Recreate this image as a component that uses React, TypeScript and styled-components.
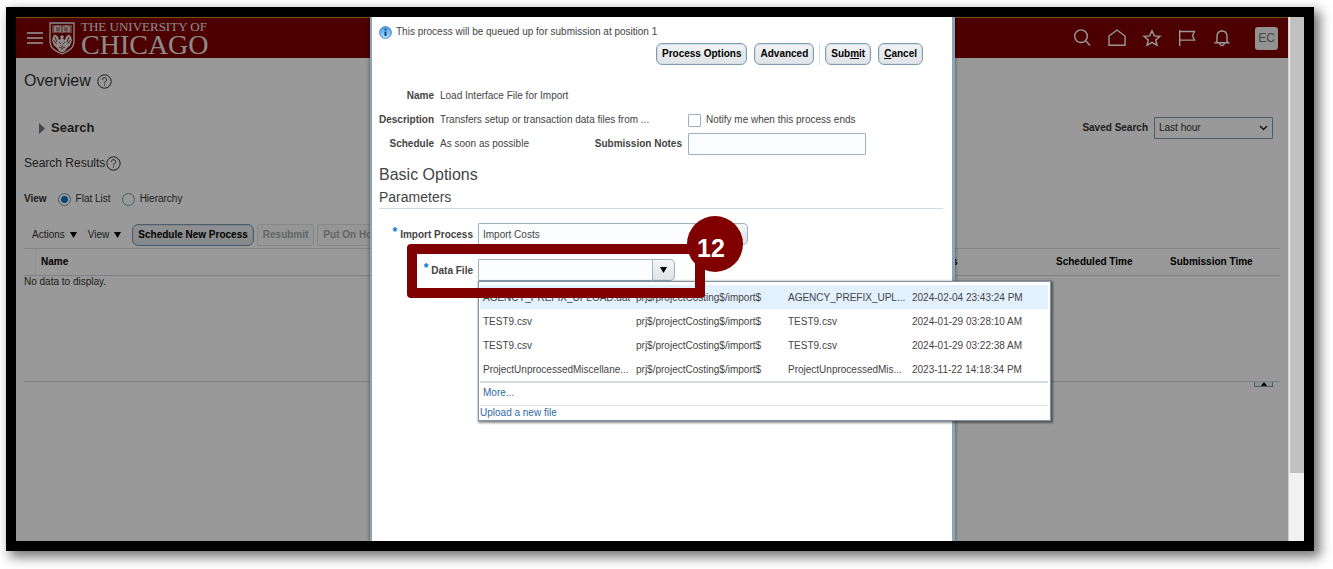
import React from "react";
import styled, { createGlobalStyle, css } from "styled-components";

const GlobalStyle = createGlobalStyle`
  * { box-sizing: border-box; }
  body {
    margin: 0;
    background: #fff;
    color: #333;
    font: 10px/12px "Liberation Sans", Arial, sans-serif;
  }
  button, input, select { font: inherit; color: inherit; margin: 0; }
  h1, h2, h3 { margin: 0; font-weight: 400; }
`;

const Frame = styled.div`
  display: flex;
  min-height: calc(100vh - 25px);
  margin: 7px 19px 18px 6px;
  border: 10px solid #000;
  box-shadow: 5px 5px 11px 1px rgba(0, 0, 0, 0.55);
`;

const Screen = styled.div`
  position: relative;
  flex: 1;
  min-width: 0;
  background: #fff;
`;

const ScrollTrack = styled.div`
  width: 16px;
  padding-left: 1px;
  background: #f1f1f1;
  border-left: 1px solid #ccc;
`;

const ScrollThumb = styled.div`
  height: 87%;
  background: #c1c1c1;
`;

const Header = styled.header`
  display: flex;
  align-items: center;
  justify-content: space-between;
  height: 41px;
  padding: 0 10px 0 11px;
  border-top: 1px solid #d08000;
  background: #800000;
  color: #fff;
`;

const HeaderGroup = styled.div<{ $gap: number }>`
  display: flex;
  align-items: center;
  gap: ${(p) => p.$gap}px;
`;

const IconButton = styled.button`
  display: flex;
  padding: 0;
  border: 0;
  background: none;
`;

const Brand = styled.a`
  display: flex;
  align-items: center;
  gap: 6px;
  color: #e8e8e8;
  text-decoration: none;
  font-family: "Liberation Serif", "Times New Roman", serif;
`;

const BrandText = styled.span`
  display: flex;
  flex-direction: column;
  padding-top: 2px;
  white-space: nowrap;
`;

const BrandSmall = styled.span`
  font-size: 13px;
  line-height: 12px;
`;

const BrandLarge = styled.span`
  font-size: 28px;
  line-height: 24px;
`;

const Avatar = styled.button`
  width: 23px;
  height: 23px;
  margin-left: 8px;
  padding: 0;
  border: 0;
  border-radius: 3px;
  background: #f4f4f4;
  color: #777;
  font-size: 12px;
`;

const Content = styled.main`
  padding: 0 8px;
`;

const TitleRow = styled.div<{ $height: number; $gap: number }>`
  display: flex;
  align-items: center;
  gap: ${(p) => p.$gap}px;
  height: ${(p) => p.$height}px;
`;

const PageTitle = styled.h1`
  font-size: 16px;
  line-height: 20px;
`;

const SectionTitle = styled.h2`
  font-size: 12px;
  line-height: 16px;
`;

const SearchRow = styled.div`
  display: flex;
  align-items: center;
  justify-content: space-between;
  height: 48px;
  padding: 0 7px 0 14px;
`;

const Disclosure = styled.button`
  display: flex;
  align-items: center;
  gap: 5px;
  padding: 0;
  border: 0;
  background: none;
  font-size: 13px;
  font-weight: 700;
`;

const BoldLabel = styled.label`
  font-weight: 700;
  white-space: nowrap;
`;

const SavedSearch = styled.div`
  display: flex;
  align-items: center;
  gap: 6px;
`;

const SelectWrap = styled.div`
  display: grid;
  align-items: center;

  > * { grid-area: 1 / 1; }
  > svg { justify-self: end; margin-right: 5px; pointer-events: none; }
`;

const Select = styled.select`
  appearance: none;
  width: 119px;
  height: 22px;
  padding: 0 4px;
  border: 1px solid #7f9cac;
  border-radius: 1px;
  background: #fff;
`;

const ViewRow = styled.div`
  display: flex;
  align-items: center;
  height: 50px;
  gap: 11px;
`;

const RadioLabel = styled.label`
  display: flex;
  align-items: center;
  gap: 5px;
`;

const Radio = styled.input`
  appearance: none;
  width: 13px;
  height: 13px;
  border: 1px solid #8099a8;
  border-radius: 50%;
  background: #fff;

  &:checked {
    background: radial-gradient(circle, #0572ce 0 3px, #fff 4px);
  }
`;

const Toolbar = styled.div`
  display: flex;
  align-items: center;
  gap: 3px;
  height: 22px;
  margin-bottom: 2px;
  padding-left: 8px;
`;

const MenuButton = styled.button`
  display: flex;
  align-items: center;
  gap: 5px;
  margin-right: 8px;
  padding: 0;
  border: 0;
  background: none;
`;

const Button = styled.button`
  height: 22px;
  padding: 0 5px;
  border: 1px solid #7f9cb2;
  border-radius: 6px;
  background: linear-gradient(#f0f2f4, #e0e4e7);
  box-shadow: inset 0 0 0 1px #d3dde4;
  color: #000;
  font-weight: 700;
  white-space: nowrap;

  &:disabled {
    border-color: #dfe4e7;
    border-radius: 2px;
    background: #fafbfc;
    box-shadow: none;
    color: #a5a8aa;
  }
`;

const ResultsTable = styled.table`
  width: 100%;
  height: 134px;
  table-layout: fixed;
  border-collapse: separate;
  border-spacing: 0;
  border-top: 1px solid #d8dfe3;
  border-bottom: 1px solid #d0d8de;

  th {
    height: 27px;
    padding: 0 5px;
    border-bottom: 1px solid #d0d8de;
    color: #000;
    text-align: left;
  }
  th:first-child { border-right: 1px solid #eee; }
  td { padding: 0; vertical-align: top; }
`;

const ScrollUp = styled.button`
  display: flex;
  justify-content: center;
  width: 19px;
  height: 5px;
  margin: 0 7px 0 auto;
  padding: 0;
  overflow: hidden;
  border: 1px solid #7f9cac;
  border-top: 0;
  background: #f3f5f6;
`;

const Backdrop = styled.div`
  position: absolute;
  inset: 0;
  display: flex;
  justify-content: center;
  padding-left: 21px;
  background: rgba(0, 0, 0, 0.4);
`;

const Dialog = styled.section`
  width: 585px;
  padding: 0 9px 0 7px;
  border: solid #8aa5b8;
  border-width: 0 3px 0 2px;
  background: #fff;
  box-shadow: 0 0 4px rgba(0, 0, 0, 0.5);
  color: #444;
`;

const InfoRow = styled.div`
  display: flex;
  align-items: center;
  gap: 4px;
  height: 26px;
  padding-top: 4px;
`;

const ButtonRow = styled.div`
  display: flex;
  justify-content: flex-end;
  gap: 7px;
  margin-bottom: 19px;
  padding-right: 20px;
`;

const Divider = styled.span`
  width: 1px;
  margin: 0 -2px;
  background: #d3dfe8;
`;

const Details = styled.div`
  display: grid;
  grid-template-columns: 55px 152px 84px 178px;
  grid-auto-rows: 24px;
  column-gap: 6px;
  align-items: center;
  margin-bottom: 7px;
`;

const DetailLabel = styled(BoldLabel)`
  justify-self: end;
`;

const DetailValue = styled.span<{ $span?: number }>`
  grid-column: span ${(p) => p.$span ?? 1};
  white-space: nowrap;
`;

const CheckLabel = styled.label`
  display: flex;
  align-items: center;
  gap: 5px;
  white-space: nowrap;
`;

const Checkbox = styled.input`
  appearance: none;
  width: 13px;
  height: 13px;
  border: 1px solid #9db2c1;
  border-radius: 1px;
  background: #fff;
`;

const inputLook = css`
  height: 22px;
  border: 1px solid #9db2c1;
  border-radius: 1px;
  background: #fbfdfe;
`;

const TextInput = styled.input`
  ${inputLook}
  width: 100%;
`;

const DialogHeading = styled.h2`
  font-size: 16px;
  line-height: 24px;
`;

const DialogSubheading = styled.h3`
  padding-bottom: 1px;
  border-bottom: 1px solid #cfdbe4;
  font-size: 14px;
  line-height: 20px;
`;

const ParamRow = styled.div`
  position: relative;
  display: grid;
  grid-template-columns: 94px 1fr;
  column-gap: 5px;
  align-items: center;
  margin-top: 14px;
`;

const ParamLabel = styled(BoldLabel)`
  text-align: right;
`;

const Required = styled.span`
  margin-right: 3px;
  color: #0572ce;
  font-size: 12px;
  line-height: 8px;
  vertical-align: 2px;
`;

const Combo = styled.div<{ $width: number }>`
  display: flex;
  width: ${(p) => p.$width}px;
`;

const ComboInput = styled.input`
  ${inputLook}
  flex: 1;
  min-width: 0;
  padding: 0 4px;
`;

const ComboButton = styled.button`
  display: flex;
  align-items: center;
  justify-content: center;
  width: 22px;
  height: 22px;
  padding: 0;
  border: 1px solid #9db2c1;
  border-left: 0;
  border-radius: 0 5px 5px 0;
  background: linear-gradient(#f3f5f6, #dfe3e6);
`;

const Popup = styled.div`
  position: absolute;
  top: 22px;
  left: 99px;
  z-index: 1;
  width: 573px;
  padding: 3px 2px 0 1px;
  border: 1px solid #7e93a5;
  background: #fff;
  box-shadow: 1px 1px 2px 1px rgba(0, 0, 0, 0.45);
`;

const FileTable = styled.table`
  width: 100%;
  table-layout: fixed;
  border-collapse: separate;
  border-spacing: 0;
  border-bottom: 2px solid #d5dde3;

  td {
    height: 24px;
    padding: 2px 3px 0;
    white-space: nowrap;
  }
`;

const FileRow = styled.tr<{ $active: boolean }>`
  background: ${(p) => (p.$active ? "#e3f0fd" : "transparent")};
`;

const PopupLink = styled.a<{ $ruled?: boolean }>`
  display: block;
  color: #2c6aa5;
  text-decoration: none;
  line-height: 14px;
  ${(p) => p.$ruled && css`
    padding: 3px 3px 5px;
    border-bottom: 1px solid #dfe5e9;
  `}
`;

const Callout = styled.div`
  position: absolute;
  top: -15px;
  left: 28px;
  z-index: 2;
  width: 298px;
  height: 54px;
  border: 10px solid #800000;
  border-radius: 4px;
  pointer-events: none;
`;

const CalloutNumber = styled.span`
  position: absolute;
  top: -38px;
  right: -48px;
  width: 56px;
  height: 56px;
  padding-right: 8px;
  border-radius: 50%;
  background: #800000;
  color: #fff;
  font-size: 25px;
  font-weight: 700;
  line-height: 64px;
  text-align: center;
`;

const Caret = () => (
  <svg width="7" height="6" viewBox="0 0 7 6" aria-hidden="true">
    <path d="M0 0h7L3.500 6z" fill="#000" />
  </svg>
);

const HelpIcon = () => (
  <svg width="15" height="15" viewBox="0 0 15 15" fill="none" stroke="#333" aria-hidden="true">
    <circle cx="7.5" cy="7.5" r="6.7" />
    <path d="M5.3 5.9c0-1.4 1-2.2 2.2-2.2s2.2.8 2.2 2c0 1.7-2.2 1.7-2.2 3.6M7.5 10.4v1.2" />
  </svg>
);

const Shield = () => (
  <svg width="26" height="33" viewBox="0 0 26 33" aria-hidden="true">
    <path d="M1 1h24v18c0 7-5 10-12 13C6 29 1 26 1 19z" fill="#800000" stroke="#e8e8e8" strokeWidth="1.3" />
    <path d="M3 3h20v8H3z" fill="#b06a6a" />
    <path d="M5 4.5l4-1 4 1.5 4-1.5 4 1v5.5l-4-.6-4 1.1-4-1.1-4 .6z" fill="#e0d4d4" />
    <path d="M7 6h4M7 8h4M15 6h4M15 8h4M13 5v5M3 11.5h20" stroke="#800000" strokeWidth=".8" />
    <path d="M13 13l2 1.500-1 2 2 1.500 1-3.500 3-2 2 2 1 4-2 5-3 2.500-2 3-3 1.500-3-1.500-2-3L5 23.500l-2-5 1-4 2-2 3 2 1 3.500 2-1.500-1-2z" fill="#e8e8e8" />
    <path d="M6 15l2 5M4.500 18l3 4M20 15l-2 5M21.500 18l-3 4M10 20l2 2M16 20l-2 2M13 23v5M10 25l2 1M16 25l-2 1" stroke="#800000" strokeWidth=".8" />
  </svg>
);

const InfoIcon = () => (
  <svg width="13" height="13" viewBox="0 0 13 13" aria-hidden="true">
    <defs>
      <radialGradient id="info" cx=".5" cy=".9" r=".9">
        <stop offset="0" stopColor="#b8e6ff" />
        <stop offset="1" stopColor="#4a9be8" />
      </radialGradient>
    </defs>
    <circle cx="6.5" cy="6.5" r="5.9" fill="url(#info)" stroke="#4f8ccc" />
    <path d="M6.500 5.500v4.500" stroke="#0b3f86" strokeWidth="2" />
    <circle cx="6.500" cy="3.500" r="1.100" fill="#0b3f86" />
  </svg>
);

const headerIcons: { label: string; shape: React.ReactNode }[] = [
  { label: "Search", shape: <><circle cx="9" cy="8.2" r="6.3" /><path d="M13.5 12.8l4.7 4.7" /></> },
  { label: "Home", shape: <path d="M2 17.200V8L10 2l8 6v9.200z" /> },
  { label: "Favorites", shape: <path d="M10 2.800l2.300 5.100 5.700.4-4.300 3.700 1.300 5.300-5-2.900-5 2.900 1.300-5.300L2 8.300l5.700-.4z" /> },
  { label: "Watchlist", shape: <path d="M2.700 2v16M2.700 3.500h14.800l-2 4.300 2 4.300H2.700" /> },
  { label: "Notifications", shape: <path d="M5 13.500V8.500c0-3.500 2-5.500 5-5.500s5 2 5 5.500v5l1.500 1.300h-13zM8 15v1.500c.5 1.300 3.500 1.300 4 0V15M10 3V2" /> },
];

const files = [
  ["AGENCY_PREFIX_UPLOAD.dat", "prj$/projectCosting$/import$", "AGENCY_PREFIX_UPL...", "2024-02-04 23:43:24 PM"],
  ["TEST9.csv", "prj$/projectCosting$/import$", "TEST9.csv", "2024-01-29 03:28:10 AM"],
  ["TEST9.csv", "prj$/projectCosting$/import$", "TEST9.csv", "2024-01-29 03:22:38 AM"],
  ["ProjectUnprocessedMiscellane...", "prj$/projectCosting$/import$", "ProjectUnprocessedMis...", "2023-11-22 14:18:34 PM"],
];

function ProcessDialog() {
  return (
    <Dialog role="dialog" aria-label="Process Details">
      <InfoRow><InfoIcon />This process will be queued up for submission at position 1</InfoRow>
      <ButtonRow>
        <Button>Process Options</Button>
        <Button>Advanced</Button>
        <Divider />
        <Button>Sub<u>m</u>it</Button>
        <Button><u>C</u>ancel</Button>
      </ButtonRow>
      <Details>
        <DetailLabel as="span">Name</DetailLabel>
        <DetailValue $span={3}>Load Interface File for Import</DetailValue>
        <DetailLabel as="span">Description</DetailLabel>
        <DetailValue $span={2}>Transfers setup or transaction data files from ...</DetailValue>
        <CheckLabel><Checkbox type="checkbox" />Notify me when this process ends</CheckLabel>
        <DetailLabel as="span">Schedule</DetailLabel>
        <DetailValue>As soon as possible</DetailValue>
        <DetailLabel htmlFor="notes">Submission Notes</DetailLabel>
        <TextInput id="notes" />
      </Details>
      <DialogHeading>Basic Options</DialogHeading>
      <DialogSubheading>Parameters</DialogSubheading>
      <ParamRow>
        <ParamLabel htmlFor="import-process"><Required>*</Required>Import Process</ParamLabel>
        <Combo $width={270}>
          <ComboInput id="import-process" defaultValue="Import Costs" />
          <ComboButton aria-label="Choose import process"><Caret /></ComboButton>
        </Combo>
      </ParamRow>
      <ParamRow>
        <ParamLabel htmlFor="data-file"><Required>*</Required>Data File</ParamLabel>
        <Combo $width={197}>
          <ComboInput id="data-file" />
          <ComboButton aria-label="Choose data file"><Caret /></ComboButton>
        </Combo>
        <Popup>
          <FileTable>
            <colgroup>
              <col width="153" /><col width="152" /><col width="124" /><col />
            </colgroup>
            <tbody>
              {files.map((cells, i) => (
                <FileRow key={i} $active={i === 0}>
                  {cells.map((cell, j) => <td key={j}>{cell}</td>)}
                </FileRow>
              ))}
            </tbody>
          </FileTable>
          <PopupLink href="#more" $ruled>More...</PopupLink>
          <PopupLink href="#upload">Upload a new file</PopupLink>
        </Popup>
        <Callout><CalloutNumber>12</CalloutNumber></Callout>
      </ParamRow>
    </Dialog>
  );
}

export default function App() {
  return (
    <>
      <GlobalStyle />
      <Frame>
        <Screen>
          <Header>
            <HeaderGroup $gap={6}>
              <IconButton aria-label="Menu">
                <svg width="16" height="14" viewBox="0 0 16 14" stroke="#fff" strokeWidth="1.5" aria-hidden="true">
                  <path d="M0 2h16M0 7h16M0 12h16" />
                </svg>
              </IconButton>
              <Brand href="#home">
                <Shield />
                <BrandText>
                  <BrandSmall>THE UNIVERSITY OF</BrandSmall>
                  <BrandLarge>CHICAGO</BrandLarge>
                </BrandText>
              </Brand>
            </HeaderGroup>
            <HeaderGroup $gap={15}>
              {headerIcons.map(({ label, shape }) => (
                <IconButton key={label} aria-label={label}>
                  <svg width="20" height="20" viewBox="0 0 20 20" fill="none" stroke="#fff" strokeWidth="1.4" aria-hidden="true">{shape}</svg>
                </IconButton>
              ))}
              <Avatar>EC</Avatar>
            </HeaderGroup>
          </Header>
          <Content>
            <TitleRow $height={46} $gap={6}><PageTitle>Overview</PageTitle><HelpIcon /></TitleRow>
            <SearchRow>
              <Disclosure>
                <svg width="8" height="11" viewBox="0 0 8 11" aria-hidden="true"><path d="M1 0l6 5.500L1 11z" fill="#707880" /></svg>
                Search
              </Disclosure>
              <SavedSearch>
                <BoldLabel htmlFor="saved">Saved Search</BoldLabel>
                <SelectWrap>
                  <Select id="saved"><option>Last hour</option></Select>
                  <svg width="9" height="6" viewBox="0 0 9 6" fill="none" stroke="#222" strokeWidth="1.5" aria-hidden="true"><path d="M1 1l3.500 3.500L8 1" /></svg>
                </SelectWrap>
              </SavedSearch>
            </SearchRow>
            <TitleRow $height={22} $gap={1}><SectionTitle>Search Results</SectionTitle><HelpIcon /></TitleRow>
            <ViewRow>
              <BoldLabel as="span">View</BoldLabel>
              <RadioLabel><Radio type="radio" name="view" defaultChecked />Flat List</RadioLabel>
              <RadioLabel><Radio type="radio" name="view" />Hierarchy</RadioLabel>
            </ViewRow>
            <Toolbar>
              <MenuButton>Actions <Caret /></MenuButton>
              <MenuButton>View <Caret /></MenuButton>
              <Button>Schedule New Process</Button>
              <Button disabled>Resubmit</Button>
              <Button disabled>Put On Hold</Button>
            </Toolbar>
            <ResultsTable>
              <colgroup>
                <col width="12" /><col /><col width="129" /><col width="114" /><col width="115" />
              </colgroup>
              <thead>
                <tr><th /><th>Name</th><th>Status</th><th>Scheduled Time</th><th>Submission Time</th></tr>
              </thead>
              <tbody>
                <tr><td colSpan={5}>No data to display.</td></tr>
              </tbody>
            </ResultsTable>
            <ScrollUp aria-label="Scroll up">
              <svg width="6" height="4" viewBox="0 0 6 4" aria-hidden="true"><path d="M3 0l3 4H0z" fill="#000" /></svg>
            </ScrollUp>
          </Content>
          <Backdrop><ProcessDialog /></Backdrop>
        </Screen>
        <ScrollTrack><ScrollThumb /></ScrollTrack>
      </Frame>
    </>
  );
}
